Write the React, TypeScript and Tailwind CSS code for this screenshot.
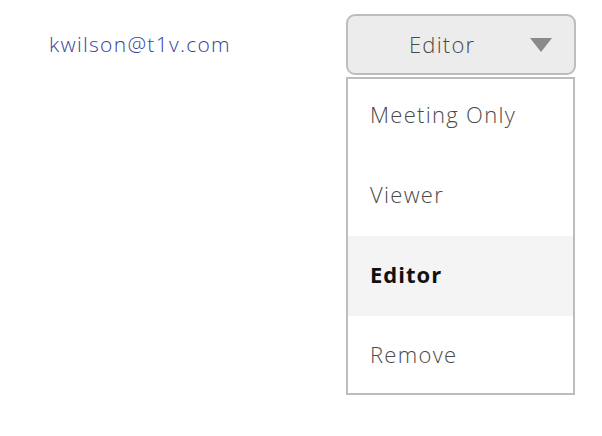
import { useState } from "react";

const roles = ["Meeting Only", "Viewer", "Editor", "Remove"];

export default function App() {
  const [selected, setSelected] = useState("Editor");

  return (
    <div className="h-[436px] w-[602px] bg-white font-['Open_Sans','Noto_Sans',sans-serif]">
      <div className="flex items-start pt-[14px]">
        <div className="w-[346px] pl-[49px] pt-[17px] text-[21px] font-light leading-[26px] tracking-[1.3px] text-[#33449a]">
          kwilson@t1v.com
        </div>
        <div className="flex w-[230px] flex-col">
          <button className="flex h-[61px] items-center rounded-[9px] border-2 border-[#bdbdbd] bg-[#ececec] pl-[61px] pr-[22px] text-[22px] font-light tracking-[1.2px] text-[#4a4a4a]">
            <span className="flex-1 text-left">{selected}</span>
            <svg width="22" height="14" viewBox="0 0 22 14">
              <path d="M0 0 H22 L11 14 Z" fill="#8a8a8a" />
            </svg>
          </button>
          <div className="mt-[2px] h-[318px] w-[229px] overflow-hidden border-2 border-[#bdbdbd] bg-white">
            <ul className="-mt-[3px]">
              {roles.map((role) => (
                <li
                  key={role}
                  onClick={() => setSelected(role)}
                  className={
                    role === selected
                      ? "flex h-[80px] items-center bg-[#f4f4f4] pb-[3px] pl-[22px] text-[22px] font-bold tracking-[1px] text-[#111111]"
                      : "flex h-[80px] items-center pb-[3px] pl-[22px] text-[22px] font-light tracking-[1.3px] text-[#4a4a4a]"
                  }
                >
                  {role}
                </li>
              ))}
            </ul>
          </div>
        </div>
      </div>
    </div>
  );
}
